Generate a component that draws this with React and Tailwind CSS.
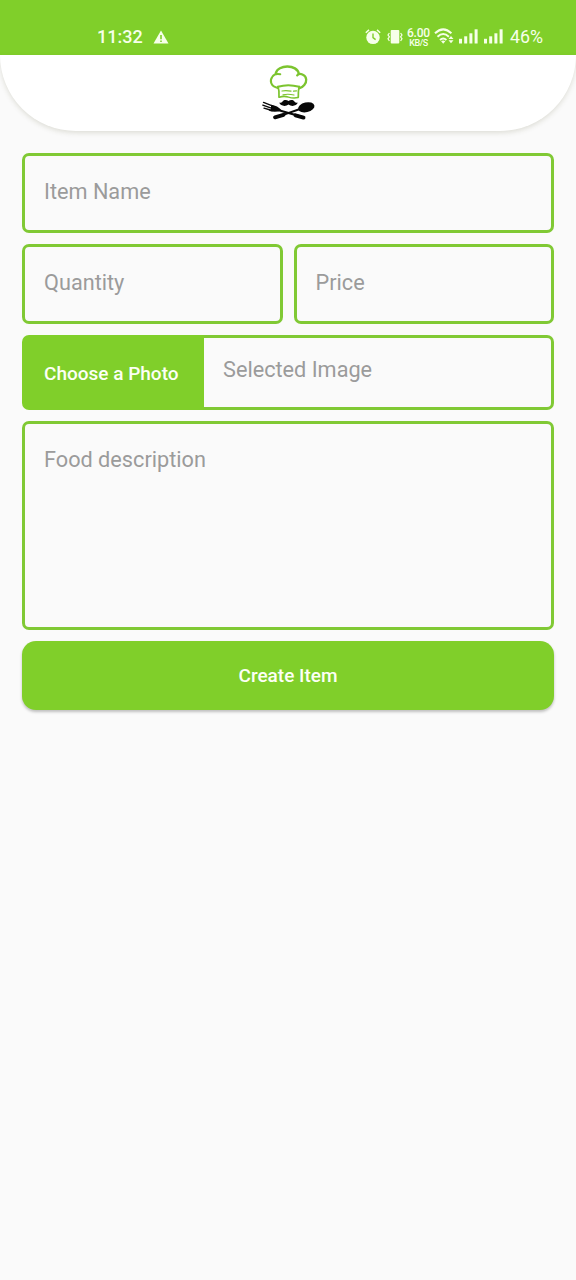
import React from "react";

function StatusBar() {
  return (
    <div className="flex h-[55px] items-start bg-[#80cf2a] pt-[26px] text-[#f6ffe9]">
      <span className="ml-[97px] w-[46px] whitespace-nowrap text-[18px] leading-[22px] font-medium">11:32</span>
      <svg className="mt-[4px] ml-[10px] h-[14px] w-4" viewBox="0 0 16 14">
        <path d="M8 .5 15.5 13.5H.5Z" fill="currentColor" />
        <path d="M8 5v4.3M8 10.4v1.5" stroke="#80cf2a" strokeWidth="1.6" />
      </svg>
      <svg className="mt-[2px] ml-[196px] h-[18px] w-4 shrink-0" viewBox="0 0 16 18">
        <circle cx="8" cy="9.4" r="6.7" fill="currentColor" />
        <path d="M.8 4.8 4 1.9M12 1.9l3.2 2.9" stroke="currentColor" strokeWidth="1.5" />
        <path d="M8 5.6v4l2.6 2" fill="none" stroke="#80cf2a" strokeWidth="1.4" />
      </svg>
      <svg className="mt-[3px] ml-[6px] h-4 w-4 shrink-0" viewBox="0 0 16 16">
        <rect x="3.7" y="1" width="8.6" height="13.5" rx="1" fill="currentColor" />
        <path d="M2.4 4 1 6l1.4 1.8L1 9.8 2.4 12M13.6 4 15 6l-1.4 1.8 1.4 2-1.4 2.2" fill="none" stroke="currentColor" strokeWidth="1.2" />
      </svg>
      <div className="mt-[2px] ml-[3px] flex w-[25px] shrink-0 flex-col items-center font-medium">
        <span className="text-[12px] leading-[11px] tracking-[-0.2px]">6.00</span>
        <span className="text-[9px] leading-[8px] tracking-[-0.4px]">KB/S</span>
      </div>
      <svg className="mt-[1px] ml-[3px] h-[18px] w-5 shrink-0" viewBox="0 0 20 18">
        <g fill="none" stroke="currentColor" strokeWidth="2">
          <path d="M1 6.3Q9.2-1.6 17.4 6.3" />
          <path d="M3.5 9.7Q9.2 4.4 14.9 9.7" />
          <path d="M6 12.9Q9.2 10 12.4 12.9" />
        </g>
        <path d="m9.2 16.8-2.1-2.6q2.1-1.6 4.2 0Z" fill="currentColor" />
        <path d="m17 9 2.5 3h-5ZM17 16.3l2.5-3h-5Z" fill="currentColor" />
      </svg>
      <Signal className="ml-[4px]" />
      <Signal className="ml-[5px]" />
      <span className="ml-[7px] whitespace-nowrap text-[17.8px] leading-[22px]">46%</span>
    </div>
  );
}

function Signal({ className }) {
  return (
    <svg className={"mt-[2px] h-[17px] w-5 shrink-0 " + className} viewBox="0 0 20 17">
      <g fill="currentColor">
        <rect x="1" y="10.8" width="3" height="4.7" />
        <rect x="6.2" y="8.3" width="3" height="7.2" />
        <rect x="11.4" y="5.3" width="3" height="10.2" />
        <rect x="16.6" y="1.3" width="3" height="14.2" />
      </g>
    </svg>
  );
}

function ChefLogo() {
  return (
    <svg className="h-[60px] w-[58px]" viewBox="260 62 58 60">
      <g fill="none" stroke="#7cc42f" strokeLinecap="round" strokeLinejoin="round">
        <path d="M277.8 88C270.5 86.5 269.5 80.5 272.3 76.8C274 74.3 276.5 73.3 280.3 74.3" strokeWidth="2" />
        <path d="M275.8 73.3C277.5 64.3 297.5 64 298.8 74" strokeWidth="2.4" />
        <path d="M297.2 75.4C299.5 72.3 305.8 74.8 306.2 79.5C306.5 83.5 303 87.2 299.5 88.2" strokeWidth="2.3" />
        <path d="M278 86.5Q279.5 91 279 97M299.2 86.5Q298 91 298.3 97" strokeWidth="1.7" />
        <path d="M278 86.8Q288 83.6 299.2 86.8" strokeWidth="2" />
        <path d="M282 91Q286 90 291 91.2M293.5 91.2l3-.3M283 94.8Q288 93.6 294 95" strokeWidth="1.2" />
        <path d="M279.3 97.2Q284 95.6 288.5 97.1T298.2 97.6" strokeWidth="1.5" />
      </g>
      <path d="M288.5 101.1C290.5 99.3 293.7 99.7 294.6 101.7Q295.8 103.3 297.8 102.6C296.7 106 291.5 107 288.5 104.5C285.5 107 280.3 106 279.2 102.6Q281.2 103.3 282.4 101.7C283.3 99.7 286.5 99.3 288.5 101.1Z" fill="#080808" />
      <g stroke="#080808" strokeLinecap="round" fill="none">
        <path d="M278 110 302.5 117" strokeWidth="2.2" />
        <path d="M295.5 115.3 303.5 117.6M275 117.3 283.5 114.8" strokeWidth="3.9" />
        <path d="M281 115.6 300 109" strokeWidth="2" />
        <path d="m263.5 102.4 9.5 3.8M262.8 105.1l9.2 3.3M264 108.1l8 2.4" strokeWidth="1.4" />
      </g>
      <path d="M271 104.8Q277.8 105.8 281.5 110.2Q276 113 268.6 110.8L271 109.3Z" fill="#080808" />
      <ellipse cx="306.3" cy="107.3" rx="8.3" ry="4.9" transform="rotate(-13 306.3 107.3)" fill="#080808" />
    </svg>
  );
}

function Field({ label, className }) {
  return (
    <div className={"rounded-[7px] border-[3px] border-[#80c934] pl-[19px] text-[21.7px] leading-[26px] text-[#9b9b9b] " + className}>
      <span className="whitespace-nowrap">{label}</span>
    </div>
  );
}

export default function App() {
  return (
    <div className="min-h-[1280px] w-[576px] overflow-hidden bg-[#fafafa] font-['Roboto',sans-serif]">
      <StatusBar />
      <header className="flex h-[76px] items-start justify-center rounded-b-[80px] bg-white pt-[7px] pl-[2px] shadow-[0_2px_5px_rgba(90,90,50,0.17)]">
        <ChefLogo />
      </header>
      <main className="flex flex-col gap-[11px] px-[22px] pt-[22px]">
        <Field label="Item Name" className="h-20 pt-[23px]" />
        <div className="flex gap-[11px]">
          <Field label="Quantity" className="h-20 flex-1 pt-[23px]" />
          <Field label="Price" className="h-20 flex-1 pt-[23px]" />
        </div>
        <div className="flex h-[75px]">
          <button className="w-[182px] rounded-l-[7px] bg-[#80cf2a] pt-[3px] pl-[22px] text-left text-[19px] font-medium whitespace-nowrap text-[#fcfff5]">
            Choose a Photo
          </button>
          <div className="flex-1 rounded-r-[7px] border-[3px] border-l-0 border-[#80c934] pt-[19px] pl-[19px] text-[21.7px] leading-[26px] text-[#9b9b9b]">
            Selected Image
          </div>
        </div>
        <Field label="Food description" className="h-[209px] pt-[23px]" />
        <button className="h-[69px] rounded-[14px] bg-[#80cf2a] pt-[2px] text-[19px] font-medium text-[#fcfff5] shadow-[0_2px_3px_rgba(0,0,0,0.24)]">
          Create Item
        </button>
      </main>
    </div>
  );
}
